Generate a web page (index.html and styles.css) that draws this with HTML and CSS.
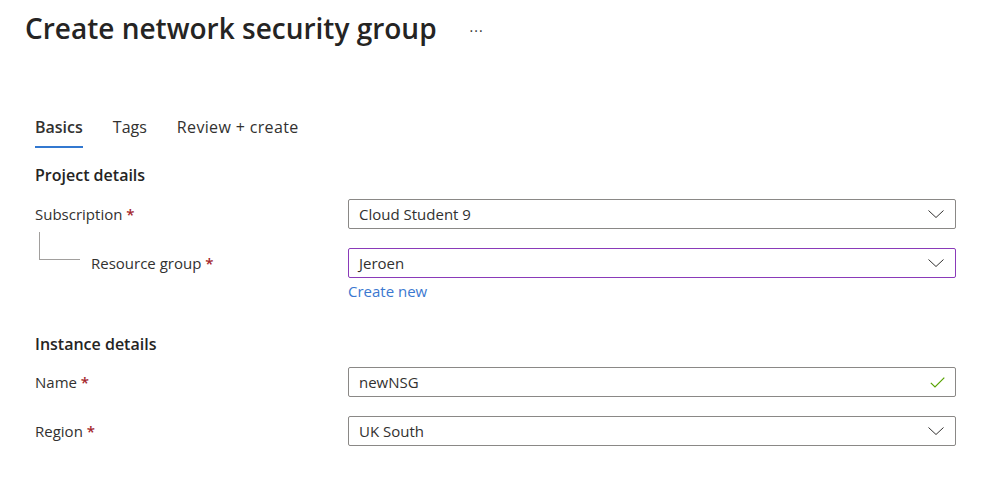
FILE: index.html
```html
<!DOCTYPE html>
<html>
<head>
<meta charset="utf-8">
<link rel="stylesheet" href="styles.css">
</head>
<body>
<div class="page">
  <header class="head">
    <h1 class="title">Create network security group</h1>
    <span class="more">···</span>
  </header>
  <div class="content">
    <nav class="tabs">
      <span class="tab active">Basics</span>
      <span class="tab">Tags</span>
      <span class="tab">Review + create</span>
    </nav>

    <h2 class="section">Project details</h2>
    <div class="row">
      <div class="label">Subscription <span class="req">*</span></div>
      <div class="field">
        <div class="box"><span class="val">Cloud Student 9</span>
          <svg class="chev" width="16" height="8" viewBox="0 0 16 8"><path d="M0.5 0.5 L8 7.5 L15.5 0.5" fill="none" stroke="#323130" stroke-width="1"/></svg>
        </div>
      </div>
    </div>
    <div class="row row2">
      <div class="label nested"><span class="tree"></span><span>Resource group <span class="req">*</span></span></div>
      <div class="field">
        <div class="box dirty"><span class="val">Jeroen</span>
          <svg class="chev" width="16" height="8" viewBox="0 0 16 8"><path d="M0.5 0.5 L8 7.5 L15.5 0.5" fill="none" stroke="#323130" stroke-width="1"/></svg>
        </div>
        <a class="link">Create new</a>
      </div>
    </div>

    <h2 class="section s2">Instance details</h2>
    <div class="row">
      <div class="label">Name <span class="req">*</span></div>
      <div class="field">
        <div class="box"><span class="val">newNSG</span>
          <svg class="check" width="15" height="11" viewBox="0 0 15 11"><path d="M0.8 5.8 L5 10 L14.3 0.7" fill="none" stroke="#57a300" stroke-width="1.2"/></svg>
        </div>
      </div>
    </div>
    <div class="row row4">
      <div class="label">Region <span class="req">*</span></div>
      <div class="field">
        <div class="box"><span class="val">UK South</span>
          <svg class="chev" width="16" height="8" viewBox="0 0 16 8"><path d="M0.5 0.5 L8 7.5 L15.5 0.5" fill="none" stroke="#323130" stroke-width="1"/></svg>
        </div>
      </div>
    </div>
  </div>
</div>
</body>
</html>
```

FILE: styles.css
```css
* { box-sizing: border-box; }
html, body { margin: 0; background: #ffffff; }
body {
  font-family: "Open Sans", "Noto Sans", "Liberation Sans", sans-serif;
  color: #323130;
  width: 983px;
  height: 477px;
  overflow: hidden;
}
.page { padding: 0 27px 0 25px; }
.head {
  display: flex;
  align-items: center;
  height: 56px;
}
.title {
  margin: 0;
  font-size: 28px;
  font-weight: 600;
  color: #252423;
  line-height: 36px;
}
.more {
  margin-left: 33px;
  font-size: 14px;
  color: #323130;
  letter-spacing: 1px;
  padding-top: 4px;
}
.content { padding-left: 10px; }
.tabs {
  display: flex;
  gap: 30px;
  margin-top: 60px;
  height: 32px;
}
.tab {
  font-size: 16px;
  line-height: 22px;
  color: #323130;
  height: 32px;
  border-bottom: 2px solid transparent;
}
.tab:last-child { letter-spacing: 0.35px; }
.tab.active {
  font-weight: 600;
  border-bottom-color: #3278d0;
}
.section {
  margin: 0;
  font-size: 16px;
  font-weight: 600;
  line-height: 22px;
  margin-top: 16px;
  color: #252423;
}
.s2 { margin-top: 31px; }
.row {
  display: flex;
  align-items: flex-start;
  margin-top: 13px;
}
.row2 { margin-top: 19px; }
.row4 { margin-top: 19px; }
.s2 + .row { margin-top: 12px; }
.label {
  width: 313px;
  font-size: 15px;
  line-height: 30px;
  color: #323130;
  flex: none;
}
.req { color: #a4262c; font-weight: 600; }
.nested { display: flex; align-items: flex-start; }
.tree {
  width: 41px;
  height: 28px;
  margin: -16px 11px 0 4px;
  border-left: 1px solid #a19f9d;
  border-bottom: 1px solid #a19f9d;
  flex: none;
}
.field { width: 608px; flex: none; display: flex; flex-direction: column; }
.box {
  height: 30px;
  border: 1px solid #8a8886;
  border-radius: 2px;
  display: flex;
  align-items: center;
  padding: 0 10px;
  font-size: 15px;
  color: #323130;
}
.box.dirty { border-color: #8a3ab9; }
.val { flex: 1; }
.chev { flex: none; margin-right: 1px; }
.check { flex: none; margin-right: 0px; }
.link {
  font-size: 15px;
  line-height: 22px;
  color: #3b78d0;
  margin-top: 2px;
}
```
